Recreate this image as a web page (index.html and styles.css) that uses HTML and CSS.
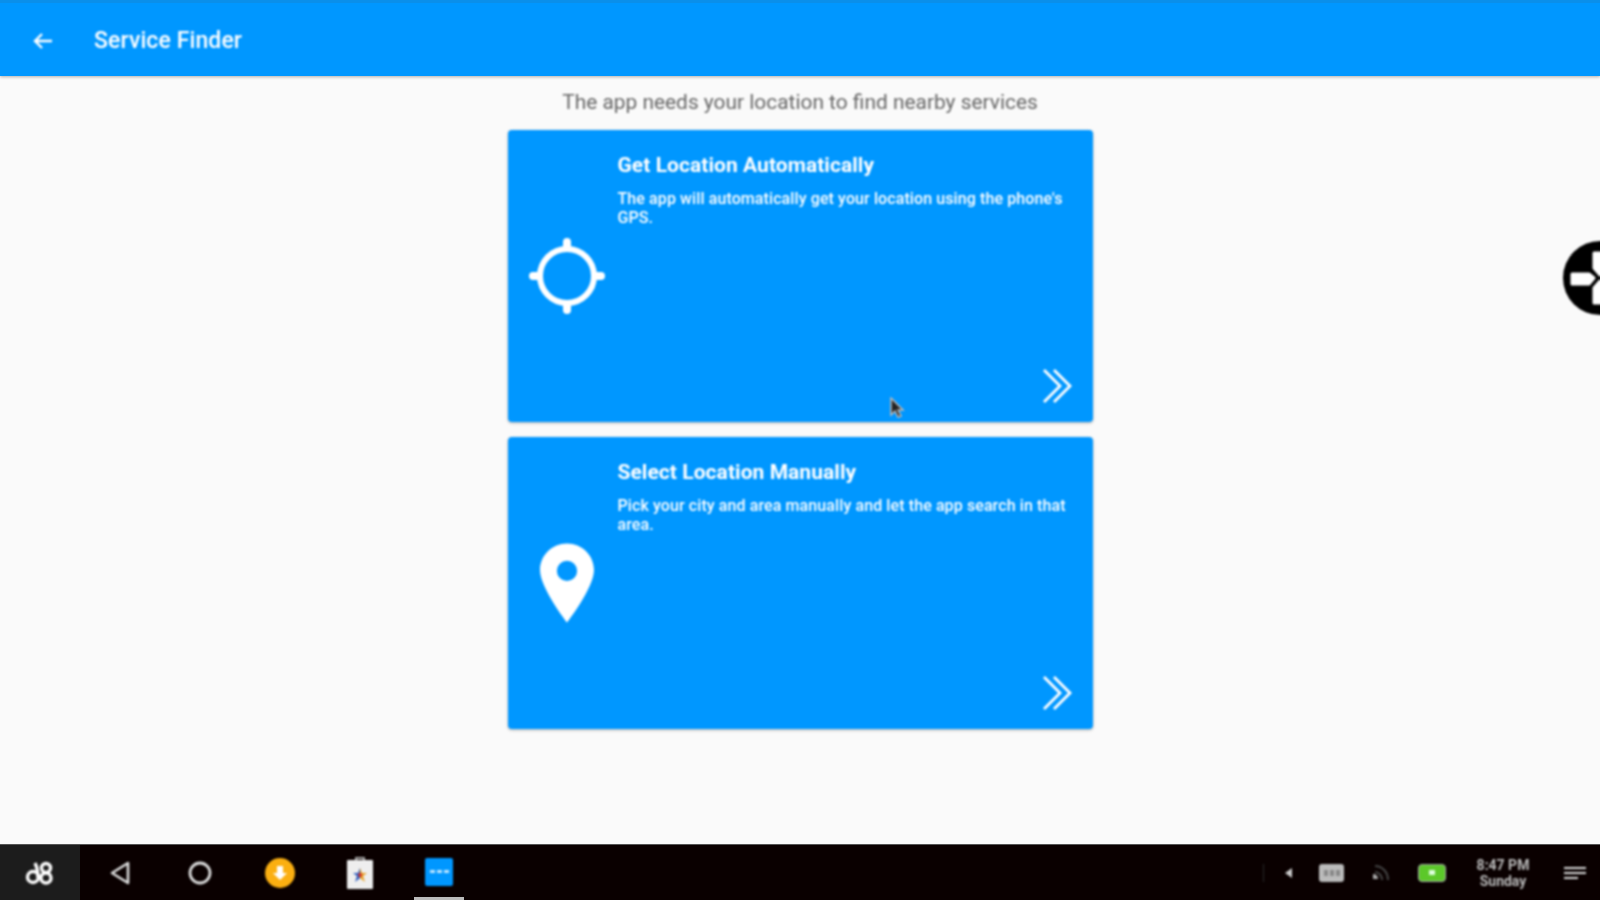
FILE: index.html
```html
<html>
   <head>
      <title>Service Finder</title>
      <link rel="stylesheet" href="styles.css">
   </head>
   <body>
      <div class="screen">
         <div class="appbar">
            <svg class="back" width="24" height="24" viewBox="0 0 24 24"><path d="M21 12H4M11 5l-7 7 7 7" fill="none" stroke="#fff" stroke-width="2.4"/></svg>
            <span class="appbar-title">Service Finder</span>
         </div>
         <div class="content">
            <div class="hint">The app needs your location to find nearby services</div>
            <div class="card">
               <div class="card-icon">
                  <svg width="78" height="78" viewBox="0 0 78 78"><circle cx="39" cy="39" r="27" fill="none" stroke="#fff" stroke-width="6"/><path d="M39 5v6M39 67v6M5 39h6M67 39h6" stroke="#fff" stroke-width="8" stroke-linecap="round"/></svg>
               </div>
               <div class="card-body">
                  <div class="card-title">Get Location Automatically</div>
                  <div class="card-text">The app will automatically get your location using the phone's GPS.</div>
                  <svg class="more" width="30" height="36" viewBox="0 0 30 36"><path d="M2 2l16 16L2 34M12 2l16 16-16 16" fill="none" stroke="#fff" stroke-width="2.8"/></svg>
               </div>
            </div>
            <div class="card">
               <div class="card-icon">
                  <svg width="54" height="80" viewBox="0 0 56 82"><path fill-rule="evenodd" d="M28 0C12.500 0 0 12.300 0 27.500 0 46 28 82 28 82S56 46 56 27.500C56 12.300 43.500 0 28 0zM28 18a10.500 10.500 0 1 1 0 21 10.500 10.500 0 0 1 0-21z" fill="#fff"/></svg>
               </div>
               <div class="card-body">
                  <div class="card-title">Select Location Manually</div>
                  <div class="card-text">Pick your city and area manually and let the app search in that area.</div>
                  <svg class="more" width="30" height="36" viewBox="0 0 30 36"><path d="M2 2l16 16L2 34M12 2l16 16-16 16" fill="none" stroke="#fff" stroke-width="2.8"/></svg>
               </div>
            </div>
         </div>
         <div class="taskbar">
            <div class="start">
               <svg width="30" height="26" viewBox="0 0 30 26"><g fill="none" stroke="#fff" stroke-width="3.400"><circle cx="8" cy="17" r="5.500"/><path d="M13 18C13 12 12 7 10 3"/><circle cx="21" cy="8" r="4.500"/><circle cx="21" cy="18" r="5"/></g></svg>
            </div>
            <div class="task-btn"><svg width="22" height="24" viewBox="0 0 22 24"><path d="M19 2v20L3 12z" fill="none" stroke="#ddd" stroke-width="2.600" stroke-linejoin="round"/></svg></div>
            <div class="task-btn"><svg width="26" height="26" viewBox="0 0 26 26"><circle cx="13" cy="13" r="10" fill="none" stroke="#ddd" stroke-width="2.800"/></svg></div>
            <div class="task-btn"><svg width="32" height="32" viewBox="0 0 32 32"><circle cx="16" cy="16" r="15" fill="#fbaf11"/><path d="M13 9h6v7h4l-7 7-7-7h4z" fill="#fff"/></svg></div>
            <div class="task-btn"><svg width="30" height="34" viewBox="0 0 30 34"><path d="M11 4V2h8v2" fill="none" stroke="#aaa" stroke-width="2"/><rect x="2" y="4" width="26" height="29" rx="1" fill="#eee"/><path d="M15 12l2 5h5l-4 3 2 6-5-4z" fill="#e8a020"/><path d="M15 12l-2 5H8l4 3-2 6 5-4z" fill="#2a5cc0"/><circle cx="15" cy="19" r="2" fill="#d03030"/></svg></div>
            <div class="task-btn active"><div class="app-tile"><i></i><i></i><i></i></div></div>
            <div class="tray">
               <div class="tray-sep"></div>
               <svg width="8" height="10" viewBox="0 0 8 10"><path d="M7 0v10L0 5z" fill="#ccc"/></svg>
               <div class="kbd"><i></i><i></i><i></i></div>
               <svg width="20" height="20" viewBox="0 0 20 20"><g fill="none" stroke="#444" stroke-width="2"><path d="M4 3c7 0 13 6 13 14"/><path d="M4 9c4 0 7 4 7 8"/></g><path d="M2 11c3 0 5 2 5 5H2z" fill="#aaa"/></svg>
               <div class="battery"><i></i></div>
               <div class="clock"><div>8:47 PM</div><div>Sunday</div></div>
               <div class="menu"><i></i><i></i><i></i></div>
            </div>
         </div>
         <div class="float-btn">
            <svg width="74" height="74" viewBox="0 0 74 74"><circle cx="37" cy="37" r="37" fill="#000"/><g fill="#fff" stroke="#fff" stroke-width="3" stroke-linejoin="round"><path d="M9 33H26L31 37 26 43H9z"/><path d="M31 12H44V28L37 34 31 27zM31 62H44V46L37 40 31 47z"/></g></svg>
         </div>
         <svg class="cursor" width="16" height="22" viewBox="0 0 16 22"><path d="M2 1l0 17 4-4 3 6 3-1-3-6h5z" fill="#222" stroke="#bbb" stroke-width="1.500"/></svg>
      </div>
   </body>
</html>
```

FILE: styles.css
```css
body {
   margin: 0;
   overflow: hidden;
   font-family: Roboto, "Liberation Sans", sans-serif;
}
.screen {
   position: relative;
   display: flex;
   flex-direction: column;
   width: 1600px;
   height: 900px;
   overflow: hidden;
   background: #fafafa;
}
/* the source is a soft video frame */
.appbar > *,
.hint,
.card,
.start svg,
.task-btn > *,
.tray,
.float-btn,
.cursor {
   filter: blur(0.8px);
}
.appbar {
   display: flex;
   align-items: center;
   flex: none;
   box-sizing: border-box;
   height: 76px;
   padding: 2px 0 0 31px;
   background: #0097ff;
   border-top: 3px solid #0a8fea;
   box-shadow: 0 1px 3px rgba(0, 0, 0, 0.3);
   color: #fff;
}
.appbar-title {
   margin-left: 39px;
   font-size: 23px;
   font-weight: 500;
   letter-spacing: 0.1px;
}
.content {
   flex: 1;
   display: flex;
   flex-direction: column;
   align-items: center;
   gap: 15px;
}
.hint {
   height: 54px;
   margin-bottom: -15px;
   padding-top: 14px;
   box-sizing: border-box;
   font-size: 20.9px;
   color: #666;
}
.card {
   display: flex;
   width: 585px;
   height: 292px;
   border-radius: 4px;
   background: #0097ff;
   box-shadow: 0 1px 3px rgba(0, 0, 0, 0.3);
   color: #fff;
}
.card-icon {
   display: flex;
   align-items: center;
   justify-content: center;
   flex: none;
   width: 118px;
}
.card-body {
   flex: 1;
   display: flex;
   flex-direction: column;
   margin-left: -8px;
   padding: 23px 21px 18px 0;
}
.card-title {
   font-size: 21px;
   font-weight: 700;
   line-height: 24px;
   letter-spacing: 0.05px;
}
.card-text {
   margin-top: 12px;
   font-size: 16px;
   font-weight: 500;
   line-height: 19px;
   letter-spacing: 0.1px;
}
.more {
   margin-top: auto;
   align-self: flex-end;
}
.taskbar {
   display: flex;
   align-items: stretch;
   flex: none;
   height: 56px;
   background: #0a0000;
   border-top: 1px solid #555;
   box-sizing: border-box;
}
.start {
   display: flex;
   align-items: center;
   justify-content: center;
   width: 80px;
   background: #1c1c1c;
}
.task-btn {
   display: flex;
   align-items: center;
   justify-content: center;
   box-sizing: border-box;
   width: 80px;
}
.task-btn.active {
   width: 50px;
   margin: 0 14px;
   border-bottom: 3px solid #bbb;
   padding-top: 1px;
}
.app-tile {
   display: flex;
   align-items: center;
   justify-content: center;
   gap: 2px;
   width: 28px;
   height: 28px;
   border-radius: 2px;
   background: #0097ff;
}
.app-tile i {
   width: 5px;
   height: 3px;
   background: #bfe6ff;
}
.tray {
   display: flex;
   align-items: center;
   margin-left: auto;
   color: #bbb;
}
.tray-sep {
   width: 1px;
   height: 18px;
   margin-right: 21px;
   background: #2a2a2a;
}
.kbd {
   display: flex;
   align-items: center;
   justify-content: center;
   gap: 2px;
   width: 25px;
   height: 18px;
   margin: 0 27px 0 26px;
   border-radius: 3px;
   background: #bbb;
}
.kbd i {
   width: 4px;
   height: 6px;
   background: #888;
}
.battery {
   display: flex;
   align-items: center;
   justify-content: center;
   width: 26px;
   height: 16px;
   margin-left: 27px;
   border-radius: 4px;
   background: #5cc82a;
   border: 1px solid #aaa;
}
.battery i {
   width: 6px;
   height: 5px;
   background: #dfd;
}
.clock {
   width: 70px;
   margin-left: 22px;
   font-size: 14px;
   line-height: 16px;
   font-weight: 700;
   text-align: center;
}
.menu {
   display: flex;
   flex-direction: column;
   gap: 3px;
   margin: 0 14px 0 26px;
}
.menu i {
   width: 22px;
   height: 2px;
   background: #ddd;
}
.menu i:last-child {
   width: 14px;
}
.float-btn {
   position: absolute;
   top: 241px;
   right: -37px;
   height: 74px;
}
.cursor {
   position: absolute;
   left: 889px;
   top: 397px;
}
```
